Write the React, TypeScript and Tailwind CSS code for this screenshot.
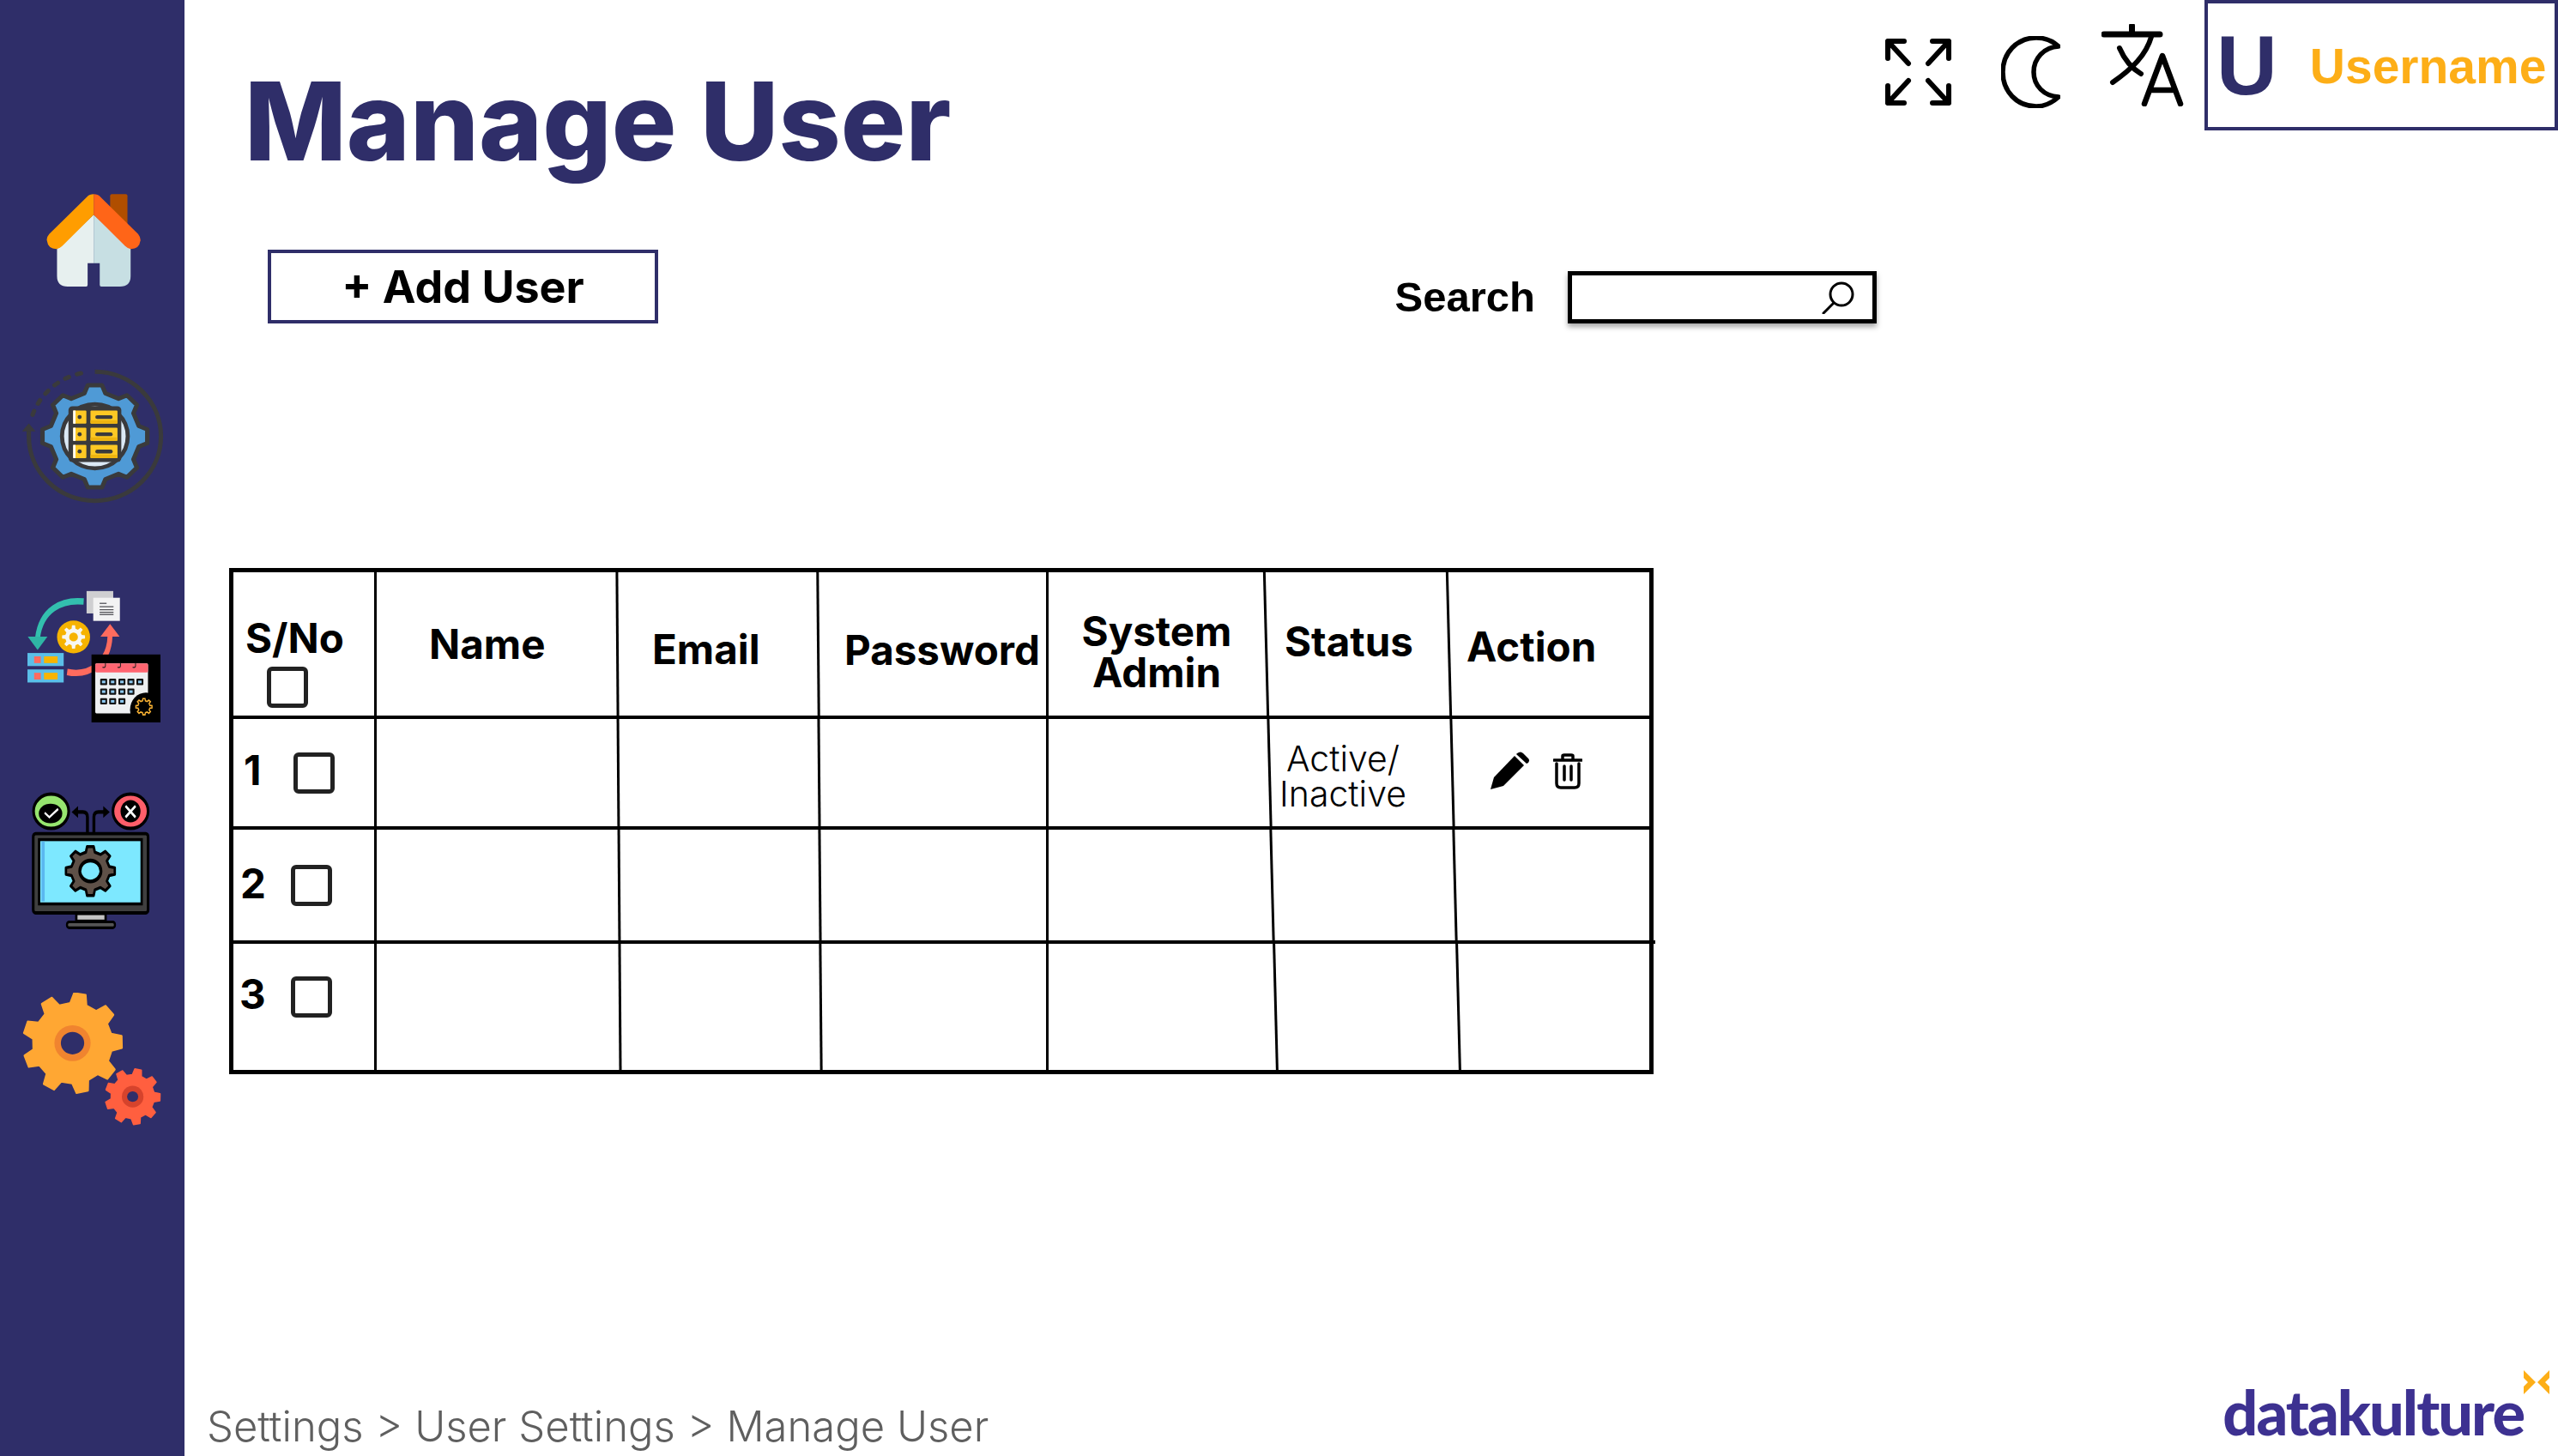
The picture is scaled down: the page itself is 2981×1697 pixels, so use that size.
import type { ReactNode } from "react";

const INTER = "font-['Inter',sans-serif]";
const ARIAL = "font-['Liberation_Sans',Arial,sans-serif]";

// builds a cog outline, sy squashes y for the icons traced from stretched crops
function gearPath(cx: number, cy: number, ro: number, ri: number, n: number, sy = 1, rot = 0) {
  const pts: string[] = [];
  const step = (Math.PI * 2) / n;
  for (let i = 0; i < n; i++) {
    const a = rot + i * step - Math.PI / 2;
    const offs: [number, number][] = [
      [-0.3, ri],
      [-0.17, ro],
      [0.17, ro],
      [0.3, ri],
    ];
    for (const [o, r] of offs) {
      const t = a + o * step;
      pts.push(`${(cx + Math.cos(t) * r).toFixed(1)} ${(cy + Math.sin(t) * r * sy).toFixed(1)}`);
    }
  }
  return `M${pts.join("L")}Z`;
}

function HomeIcon() {
  return (
    <svg viewBox="160 137 327 325" className="w-[110px] h-[108px]" preserveAspectRatio="none">
      <rect x="381" y="138" width="60" height="115" rx="6" fill="#b04e00" />
      <path d="M324 210L197 330V425Q197 462 234 462H298Q303 462 303 456V380H324Z" fill="#e7f0ef" />
      <path d="M324 210L452 330V425Q452 462 415 462H350Q345 462 345 456V380H324Z" fill="#c7dfe3" />
      <path d="M324 138Q310 138 300 148L170 278Q160 290 162 300Q166 330 195 330Q205 330 215 320L324 210Z" fill="#ff9d00" />
      <path d="M324 138Q338 138 348 148L478 278Q487 290 486 300Q482 330 453 330Q443 330 433 320L324 210Z" fill="#ff6518" />
    </svg>
  );
}

function ServerGearIcon() {
  const dark = "#3a3a3c";
  const rows = [895, 955, 1015];
  return (
    <svg viewBox="80 750 485 470" className="w-[166px] h-[157px]" preserveAspectRatio="none">
      <path d="M330 760A225 225 0 1 1 105 985V960" fill="none" stroke={dark} strokeWidth="15" />
      <path d="M105 940L82 968H128Z" fill={dark} />
      <path d="M118 910A225 225 0 0 1 300 762" fill="none" stroke={dark} strokeWidth="15" strokeLinecap="round" strokeDasharray="14 29" />
      <path d={gearPath(330, 985, 180, 154, 8)} fill="#4f9ad6" stroke={dark} strokeWidth="15" strokeLinejoin="round" />
      <circle cx="330" cy="985" r="112" fill="#dbe9f5" stroke={dark} strokeWidth="14" />
      <rect x="240" y="880" width="180" height="195" rx="14" fill={dark} />
      {rows.map((y) => (
        <g key={y}>
          <rect x="256" y={y} width="45" height="46" rx="3" fill="#fdc824" />
          <rect x="315" y={y} width="92" height="46" rx="3" fill="#fdc824" />
          <rect x="315" y={y + 34} width="92" height="12" rx="3" fill="#eeb40f" />
          <rect x="256" y={y} width="8" height="46" fill="#ffffff" />
          <circle cx="278" cy={y + 23} r="7" fill={dark} />
          <line x1="338" y1={y + 23} x2="384" y2={y + 23} stroke={dark} strokeWidth="13" strokeLinecap="round" />
        </g>
      ))}
    </svg>
  );
}

function ScheduleIcon() {
  const sy = 0.785;
  const cols = [354, 385, 417, 448, 479];
  const rows: [number, number][] = [
    [305, 5],
    [331, 4],
    [357, 3],
  ];
  return (
    <svg viewBox="100 68 462 354" className="w-[156px] h-[154px]" preserveAspectRatio="none">
      <rect x="307" y="70" width="92" height="60" fill="#cfcfd1" />
      <rect x="330" y="88" width="92" height="62" fill="#f3f3f3" />
      {[103, 112, 120, 127, 133].map((y, i) => (
        <line key={y} x1="352" x2={i === 0 ? 376 : 400} y1={y} y2={y} stroke="#55555a" strokeWidth="3" />
      ))}
      <path d="M297 98C220 92 150 120 138 195" fill="none" stroke="#33bfae" strokeWidth="17" />
      <path d="M104 192H172L138 228Z" fill="#2fb5a5" />
      <ellipse cx="262" cy="193" rx="57" ry="44" fill="#f6b300" />
      <path d={gearPath(262, 193, 40, 29, 8, sy)} fill="#f7f7f2" />
      <ellipse cx="262" cy="193" rx="15" ry="12" fill="#f6b300" />
      {[236, 280].map((y) => (
        <g key={y}>
          <rect x="103" y={y} width="125" height="35" fill="#5bbfe8" />
          <rect x="126" y={y + 9} width="23" height="18" fill="#ff6b5e" />
          <rect x="160" y={y + 9} width="47" height="18" fill="#f8b400" />
        </g>
      ))}
      <path d="M240 287C320 300 385 260 388 190" fill="none" stroke="#ff6b5e" strokeWidth="17" />
      <path d="M355 192H421L388 158Z" fill="#ff6b5e" />
      <rect x="324" y="240" width="238" height="182" fill="#000000" />
      <rect x="337" y="264" width="182" height="134" rx="4" fill="#eef0f2" />
      <rect x="337" y="264" width="182" height="24" rx="4" fill="#ff6470" />
      {[372, 424, 476].map((x) => (
        <path key={x} d={`M${x} 262V270Q${x} 276 ${x - 10} 274`} fill="none" stroke="#222222" strokeWidth="3" />
      ))}
      {rows.map(([y, count]) =>
        cols.slice(0, count).map((x) => (
          <g key={`${x}-${y}`}>
            <rect x={x} y={y} width="24" height="17" rx="3" fill="#111111" />
            <rect x={x + 6} y={y + 5} width="12" height="7" fill="#8cc8f0" />
          </g>
        ))
      )}
      <ellipse cx="512" cy="388" rx="55" ry="46" fill="#000000" />
      <path d={gearPath(505, 380, 28, 21, 8, sy)} fill="#000000" stroke="#f9b233" strokeWidth="4" />
    </svg>
  );
}

function MonitorIcon() {
  return (
    <svg viewBox="115 602 410 372" className="w-[140px] h-[162px]" preserveAspectRatio="none">
      <path d="M308 716V672Q308 658 292 658H266M330 716V672Q330 658 346 658H374" fill="none" stroke="#000000" strokeWidth="10" />
      <path d="M254 658L276 642V674ZM384 658L362 642V674Z" fill="#000000" />
      <ellipse cx="184" cy="656" rx="60" ry="46" fill="#96e56f" stroke="#000000" strokeWidth="9" />
      <ellipse cx="182" cy="662" rx="40" ry="26" fill="#000000" />
      <path d="M162 660L178 672L208 650" fill="none" stroke="#ffffff" strokeWidth="6" />
      <ellipse cx="455" cy="656" rx="60" ry="46" fill="#ff5e6a" stroke="#000000" strokeWidth="9" />
      <ellipse cx="455" cy="656" rx="34" ry="30" fill="#000000" />
      <path d="M438 642L472 672M472 642L438 672" stroke="#ffffff" strokeWidth="7" />
      <rect x="123" y="716" width="392" height="212" rx="8" fill="#3f3f3f" stroke="#000000" strokeWidth="9" />
      <rect x="143" y="732" width="350" height="172" fill="#7de8ff" stroke="#000000" strokeWidth="8" />
      <rect x="151" y="737" width="11" height="160" fill="#5bb8f0" />
      <path d={gearPath(318, 816, 84, 66, 8, 0.785)} fill="#5f5148" stroke="#000000" strokeWidth="8" strokeLinejoin="round" />
      <ellipse cx="318" cy="816" rx="36" ry="28" fill="#7de8ff" stroke="#000000" strokeWidth="10" />
      <rect x="270" y="930" width="100" height="20" fill="#c4c4c4" stroke="#000000" strokeWidth="8" />
      <rect x="238" y="952" width="164" height="16" rx="8" fill="#555555" stroke="#000000" strokeWidth="7" />
    </svg>
  );
}

function GearsIcon() {
  const sy = 0.785;
  const navy = "#2f2e69";
  return (
    <svg viewBox="80 1145 485 358" className="w-[165px] h-[156px]" preserveAspectRatio="none">
      <path d={gearPath(252, 1280, 170, 136, 9, sy, 0.15)} fill="#ffa733" stroke="#ffa733" strokeWidth="6" strokeLinejoin="round" />
      <ellipse cx="252" cy="1280" rx="62" ry="48" fill="#f0842f" />
      <ellipse cx="252" cy="1280" rx="40" ry="30" fill={navy} />
      <path d={gearPath(458, 1423, 94, 74, 9, sy, 0.2)} fill="#ff5f3f" stroke="#ff5f3f" strokeWidth="5" strokeLinejoin="round" />
      <ellipse cx="458" cy="1423" rx="37" ry="29" fill="#d6432c" />
      <ellipse cx="458" cy="1423" rx="19" ry="14" fill={navy} />
    </svg>
  );
}

function ExpandIcon() {
  return (
    <svg viewBox="0 0 77 78" className="w-[77px] h-[78px] mt-[45px]" fill="none" stroke="#000000" strokeWidth="6" strokeLinecap="round" strokeLinejoin="round">
      <path d="M22 3H3V23M3 3L27 29" />
      <path d="M55 3H74V23M74 3L50 29" />
      <path d="M22 75H3V55M3 75L27 49" />
      <path d="M55 75H74V55M74 75L50 49" />
    </svg>
  );
}

function MoonIcon() {
  return (
    <svg viewBox="0 0 69 84" className="w-[69px] h-[84px] mt-[42px] ml-[58px]" fill="none" stroke="#000000" strokeWidth="5.5" strokeLinejoin="round">
      <path d="M67 12C58 4 50 2 41 2C18 2 2 20 2 42C2 64 18 82 41 82C50 82 58 79 67 71C50 70 38 58 38 42C38 26 50 13 67 12Z" />
    </svg>
  );
}

function TranslateIcon() {
  return (
    <svg viewBox="0 0 96 96" className="w-[96px] h-[96px] mt-[28px] ml-[48px]" fill="none" stroke="#000000" strokeLinecap="round" strokeLinejoin="round">
      <path d="M35.5 2V12M3 12H68" strokeWidth="7" />
      <path d="M58 15C52 36 36 52 13 68M21 28C27 42 36 52 46 58" strokeWidth="6" />
      <path d="M50 93L71 37L92 93M58 77H84" strokeWidth="6.5" />
    </svg>
  );
}

function SearchIcon() {
  return (
    <svg viewBox="0 0 38 38" className="w-[38px] h-[38px]" fill="none" stroke="#000000" strokeWidth="3" strokeLinecap="round">
      <circle cx="23" cy="15" r="13" />
      <path d="M14 25L2 37" />
    </svg>
  );
}

function PencilIcon() {
  return (
    <svg viewBox="0 0 47 46" className="w-[47px] h-[46px] ml-[42px] mt-[37px]">
      <path d="M1 45L5 31L29 6L40 17L16 41Z" fill="#000000" />
      <path d="M32 3Q36 0 39 3L45 9Q47 11 45 14L43 15L31 4Z" fill="#000000" />
    </svg>
  );
}

function TrashIcon() {
  return (
    <svg viewBox="0 0 34 42" className="w-[34px] h-[42px] ml-[27px] mt-[40px]" fill="none" stroke="#000000" strokeWidth="3.5" strokeLinecap="round">
      <path d="M1 8H33M11 7V3Q11 2 13 2H21Q23 2 23 3V7" />
      <path d="M4 12V35Q4 40 9 40H25Q30 40 30 35V12" />
      <path d="M13 15V31M21 15V31" />
    </svg>
  );
}

function Checkbox({ className }: { className: string }) {
  return <span className={`block w-[48px] h-[48px] rounded-[6px] border-[5px] border-[#222222] ${className}`} />;
}

// one grid line; skewed so the wireframe's leaning lines carry through every row
function Line({ lean = "" }: { lean?: string }) {
  return <div className={`w-[3px] h-full bg-black ${lean}`} />;
}

function Row({ columns, height, cells }: { columns: string; height: string; cells: ReactNode[] }) {
  const leans = ["", "skew-x-[0.4deg]", "skew-x-[0.5deg]", "", "skew-x-[1.47deg]", "skew-x-[1.47deg]"];
  return (
    <div className={`grid ${columns} ${height}`}>
      {cells.map((cell, i) => (
        <div key={i} className="contents">
          <div>{cell}</div>
          {i < leans.length && <Line lean={leans[i]} />}
        </div>
      ))}
    </div>
  );
}

const headText = `${INTER} font-bold text-[47.5px] leading-[48px] text-black`;

const rows = [
  { n: "1", columns: "grid-cols-[164px_3px_280px_3px_231px_3px_263px_3px_256px_3px_210px_3px_228px]", height: "h-[125px]", numberClass: "ml-[12px] mt-[36px] w-[58px]", boxClass: "mt-[39px]" },
  { n: "2", columns: "grid-cols-[164px_3px_281px_3px_231px_3px_262px_3px_259px_3px_210px_3px_225px]", height: "h-[129px]", numberClass: "ml-[8px] mt-[39px] w-[59px]", boxClass: "mt-[41px]" },
  { n: "3", columns: "grid-cols-[164px_3px_282px_3px_231px_3px_261px_3px_263px_3px_210px_3px_221px]", height: "h-[147px]", numberClass: "ml-[7px] mt-[35px] w-[60px]", boxClass: "mt-[38px]" },
];

function UserTable() {
  return (
    <div className="w-[1660px] ml-[52px] mt-[285px] border-[5px] border-black bg-white">
      <Row
        columns="grid-cols-[164px_3px_279px_3px_231px_3px_264px_3px_252px_3px_210px_3px_232px]"
        height="h-[167px]"
        cells={[
          <div className="pl-[14px] pt-[53px]">
            <p className={headText}>S/No</p>
            <Checkbox className="ml-[25px] mt-[9px]" />
          </div>,
          <p className={`${headText} pl-[61px] pt-[60px]`}>Name</p>,
          <p className={`${headText} pl-[39px] pt-[66px]`}>Email</p>,
          <p className={`${headText} pl-[29px] pt-[67px]`}>Password</p>,
          <p className={`${headText} pt-[45px] text-center`}>
            System
            <br />
            Admin
          </p>,
          <p className={`${headText} pl-[20px] pt-[57px]`}>Status</p>,
          <p className={`${headText} pl-[19px] pt-[63px]`}>Action</p>,
        ]}
      />
      {rows.map((row, i) => (
        <div key={row.n} className="relative">
          <div className="h-[4px] bg-black" />
          {i === 2 && <div className="absolute -right-[7px] top-0 w-[7px] h-[4px] bg-black" />}
          <Row
            columns={row.columns}
            height={row.height}
            cells={[
              <div className="flex items-start">
                <span className={`${headText} ${row.numberClass}`}>{row.n}</span>
                <Checkbox className={row.boxClass} />
              </div>,
              null,
              null,
              null,
              null,
              i === 0 ? (
                <p className={`${INTER} font-light text-[41px] leading-[41px] text-black w-[168px] text-center pt-[26px]`}>
                  Active/
                  <br />
                  Inactive
                </p>
              ) : null,
              i === 0 ? (
                <div className="flex items-start">
                  <PencilIcon />
                  <TrashIcon />
                </div>
              ) : null,
            ]}
          />
        </div>
      ))}
    </div>
  );
}

export default function App() {
  return (
    <div className="flex w-[2981px] h-[1697px] overflow-hidden bg-white">
      <aside className="w-[215px] h-full bg-[#2f2e69] flex flex-col items-center">
        <div className="mt-[226px] ml-[2px]">
          <HomeIcon />
        </div>
        <div className="mt-[96px]">
          <ServerGearIcon />
        </div>
        <div className="mt-[101px] ml-[3px]">
          <ScheduleIcon />
        </div>
        <div className="mt-[80px] -ml-[3px]">
          <MonitorIcon />
        </div>
        <div className="mt-[73px] ml-[2px]">
          <GearsIcon />
        </div>
      </aside>

      <main className="flex-1 flex flex-col min-w-0">
        <header className="flex items-start h-[208px]">
          <h1 className={`${INTER} font-extrabold text-[126px] leading-[133px] text-[#2f2e69] ml-[70px] mt-[75px]`}>Manage User</h1>
          <div className="ml-auto flex items-start">
            <ExpandIcon />
            <MoonIcon />
            <TranslateIcon />
            <div className={`${ARIAL} font-bold ml-[24px] w-[412px] h-[152px] border-[4px] border-[#2f2e69] flex items-center`}>
              <span className="text-[98px] leading-none text-[#2f2e69] ml-[10px]">U</span>
              <span className="text-[57px] leading-none text-[#fdae17] ml-[38px] pt-[2px]">Username</span>
            </div>
          </div>
        </header>

        <div className="flex items-end justify-between w-[1875px] ml-[97px] mt-[83px]">
          <button className={`${INTER} font-bold text-[52px] leading-none text-black w-[455px] h-[86px] pt-[2px] border-[4px] border-[#2f2e69] flex items-center justify-center`}>
            + Add User
          </button>
          <div className="flex items-center gap-[38px]">
            <span className={`${ARIAL} font-bold text-[49px] leading-none text-black`}>Search</span>
            <div className="w-[360px] h-[61px] border-[5px] border-black shadow-[0_4px_6px_rgba(0,0,0,0.35)] flex items-center justify-end pr-[21px]">
              <SearchIcon />
            </div>
          </div>
        </div>

        <UserTable />

        <footer className="mt-auto flex items-end justify-between">
          <p className={`${INTER} font-light text-[49px] leading-[60px] text-[#5f5f5f] ml-[26px] mb-[4px]`}>Settings &gt; User Settings &gt; Manage User</p>
          <div className="relative mr-[40px] mb-[18px]">
            <span className="font-['Lato',sans-serif] font-black text-[72px] leading-[60px] tracking-[-2px] text-[#3d3191]">datakulture</span>
            <svg viewBox="0 0 30 28" className="absolute -right-[30px] -top-[18px] w-[30px] h-[28px]">
              <path d="M0 0L14 14L0 28V19L5 14L0 9Z" fill="#fdae17" />
              <path d="M30 0L16 14L30 28V19L25 14L30 9Z" fill="#fdae17" />
            </svg>
          </div>
        </footer>
      </main>
    </div>
  );
}
